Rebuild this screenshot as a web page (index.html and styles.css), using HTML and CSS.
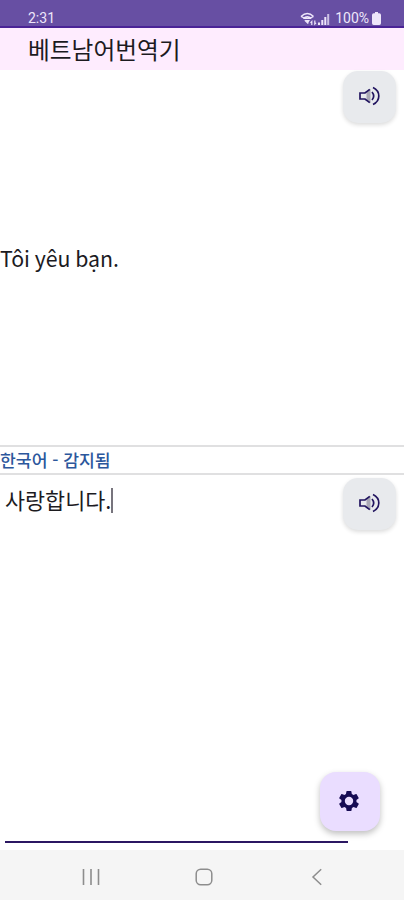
FILE: index.html
```html
<!DOCTYPE html>
<html lang="ko">
<head>
    <meta charset="UTF-8">
    <meta name="viewport" content="width=device-width, initial-scale=1.0">
    <title>베트남어번역기</title>
    <link rel="stylesheet" href="styles.css">
</head>
<body>

    <div class="status-bar">
        <span class="clock">2:31</span>
        <div class="status-icons">
            <svg class="wifi" width="17" height="14" viewBox="0 0 17 14" fill="none" stroke="currentColor" stroke-width="1.3">
                <path d="M1 4.500Q7.300-1.500 13.600 4.500M3.200 6.500Q7.300 2.800 11.400 6.500M1 4.500Q7.300 8 13.600 4.500M4.800 8.300l3.500 3.200"/>
                <path d="M5 8h5l-2.200 3.400z" fill="currentColor" stroke="none"/>
                <path d="M11.800 13V9.500l-1.300 1.300M14.800 8.500V12l1.200-1.200" stroke-width="1.200"/>
            </svg>
            <svg class="signal" width="12" height="12" viewBox="0 0 12 12" fill="currentColor">
                <path d="M0 9.5h2V12H0zM3.3 7h2v5h-2zM6.3 4h2v8h-2z"/>
                <path d="M9.2 1h2v11h-2z" opacity=".75"/>
            </svg>
            <span class="percent">100%</span>
            <svg class="battery" width="9" height="13" viewBox="0 0 9 13" fill="currentColor">
                <path d="M3 0h3v1.3h1.2Q9 1.3 9 3v8.3Q9 13 7.3 13H1.7Q0 13 0 11.3V3q0-1.7 1.8-1.7H3z"/>
            </svg>
        </div>
    </div>

    <header class="title-bar">
        <h1>베트남어번역기</h1>
    </header>

    <main class="translator">
        <section class="output">
            <p class="translated" lang="vi">Tôi yêu bạn.</p>
            <button class="speak-btn" aria-label="듣기">
                <svg width="24" height="24" viewBox="0 0 24 24" fill="none" stroke="currentColor" stroke-width="1.7">
                    <path d="M9.500 8l4-3v14l-4-3z" stroke="none" fill="#a9a8b5"/>
                    <path d="M12.800 5.300L8 9H3v6h5l4.800 3.700"/>
                    <path d="M15 8q3.400 4 0 8M16 3.500q5.800 2.800 5.800 8.500T16 20.500"/>
                </svg>
            </button>
        </section>

        <div class="language">한국어 - 감지됨</div>

        <section class="input">
            <div class="source">사랑합니다.<span class="caret"></span></div>
            <button class="speak-btn" aria-label="듣기">
                <svg width="24" height="24" viewBox="0 0 24 24" fill="none" stroke="currentColor" stroke-width="1.7">
                    <path d="M9.500 8l4-3v14l-4-3z" stroke="none" fill="#a9a8b5"/>
                    <path d="M12.800 5.300L8 9H3v6h5l4.800 3.700"/>
                    <path d="M15 8q3.400 4 0 8M16 3.500q5.800 2.800 5.800 8.500T16 20.500"/>
                </svg>
            </button>
            <button class="settings-btn" aria-label="설정">
                <svg width="24" height="24" viewBox="0 0 24 24" fill="currentColor">
                    <path fill-rule="evenodd" d="M19.4 13c.1-.3.1-.7.1-1s0-.7-.1-1l2.1-1.6c.2-.2.3-.4.1-.7l-2-3.4c-.1-.2-.4-.3-.6-.2l-2.5 1c-.5-.4-1.1-.7-1.7-1l-.4-2.6c0-.3-.2-.5-.5-.5h-4c-.3 0-.5.2-.5.5L9 5.100c-.6.3-1.100.6-1.600 1l-2.500-1c-.2-.1-.5 0-.6.2l-2 3.400c-.1.3-.1.5.1.7L4.500 11c0 .3-.1.7-.1 1s0 .7.1 1l-2.100 1.600c-.2.2-.3.4-.1.7l2 3.400c.1.2.4.3.6.2l2.500-1c.5.4 1.100.7 1.700 1l.4 2.600c0 .3.2.5.5.5h4c.3 0 .5-.2.5-.5l.4-2.600c.6-.3 1.200-.6 1.700-1l2.500 1c.2.1.5 0 .6-.2l2-3.400c.1-.3.1-.5-.1-.7zM12 16.200a4.200 4.200 0 1 1 0-8.400 4.200 4.200 0 0 1 0 8.400z"/>
                </svg>
            </button>
        </section>
    </main>

    <nav class="nav-bar">
        <svg width="18" height="18" viewBox="0 0 18 18" fill="none" stroke="currentColor" stroke-width="1.6">
            <path d="M1.500 1v16M9 1v16M16.500 1v16"/>
        </svg>
        <svg width="18" height="18" viewBox="0 0 18 18" fill="none" stroke="currentColor" stroke-width="1.5">
            <rect x="1.200" y="1.200" width="15.600" height="15.600" rx="4.500"/>
        </svg>
        <svg width="18" height="18" viewBox="0 0 18 18" fill="none" stroke="currentColor" stroke-width="1.500">
            <path d="M13.200 1.200L5 9l8.200 7.800"/>
        </svg>
    </nav>

</body>
</html>
```

FILE: styles.css
```css
* {
    box-sizing: border-box;
}

body {
    font-family: "Noto Sans CJK KR", "Noto Sans", sans-serif;
    background-color: #fff;
    color: #1c1b1f;
    margin: 0;
    height: 100vh;
    display: flex;
    flex-direction: column;
    overflow: hidden;
}

button {
    border: none;
    padding: 0 2px 2px 0;
    display: flex;
    justify-content: center;
    align-items: center;
    color: #21145f;
    cursor: pointer;
}

/* Status Bar */
.status-bar {
    height: 28px;
    flex: none;
    display: flex;
    justify-content: space-between;
    align-items: flex-end;
    padding: 0 23px 0 28px;
    background-color: #674fa3;
    border-bottom: 2px solid #4a2396;
    color: #eee6fa;
    font-family: Roboto, sans-serif;
    font-size: 14px;
    line-height: 15px;
}

.status-icons {
    display: flex;
    align-items: center;
}

.signal {
    margin-left: 1px;
}

.percent {
    margin: 0 3px 0 5px;
}

/* Title */
.title-bar {
    height: 42px;
    flex: none;
    padding-left: 28px;
    background-color: #feecfe;
}

h1 {
    margin: 0;
    font-size: 23.7px;
    font-weight: 400;
    line-height: 42px;
}

/* Translation */
.translator {
    flex: 1;
    display: flex;
    flex-direction: column;
}

.output {
    height: 375px;
    display: flex;
    justify-content: space-between;
    align-items: flex-start;
    padding: 1px 8px 0 0;
}

.translated {
    margin: 0;
    align-self: center;
    font-family: "Noto Sans CJK SC", sans-serif;
    font-size: 21.3px;
    line-height: 32px;
}

.language {
    height: 30px;
    border-top: 2px solid #e0e0e1;
    border-bottom: 2px solid #e0e0e1;
    color: #2c579c;
    font-size: 17.2px;
    font-weight: 500;
    line-height: 26px;
}

.input {
    flex: 1;
    display: flex;
    justify-content: space-between;
    align-items: flex-start;
    position: relative;
    padding: 3px 8px 0 5px;
}

/* Field underline */
.input::after {
    content: "";
    position: absolute;
    left: 5px;
    right: 56px;
    bottom: 7px;
    height: 2px;
    background-color: #2b1762;
}

.source {
    display: flex;
    align-items: center;
    font-size: 21.8px;
    line-height: 44px;
}

.caret {
    width: 2px;
    height: 25px;
    background-color: #77747d;
}

.speak-btn {
    width: 53px;
    height: 52px;
    border-radius: 15px;
    background-color: #e8eaed;
    box-shadow: 0 2px 4px rgba(0, 0, 0, 0.14);
}

/* Settings Button (Bottom Right) */
.settings-btn {
    position: absolute;
    right: 24px;
    bottom: 19px;
    width: 60px;
    height: 59px;
    border-radius: 16px;
    background-color: #eaddff;
    color: #160b54;
    box-shadow: 0 3px 6px rgba(0, 0, 0, 0.25);
}

/* Navigation Bar */
.nav-bar {
    height: 50px;
    flex: none;
    display: flex;
    justify-content: space-between;
    align-items: center;
    padding: 3px 78px 0 82px;
    background-color: #f5f5f5;
    color: #8d8d8d;
}
```
